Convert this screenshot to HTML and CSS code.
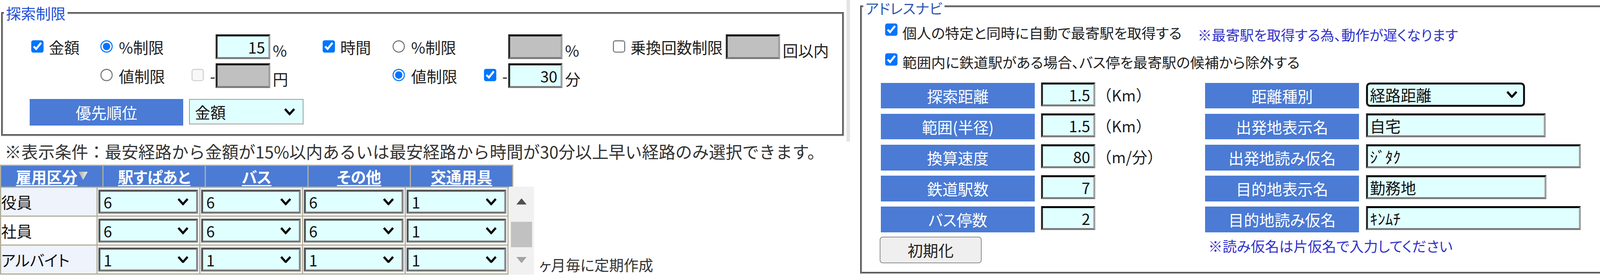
FILE: index.html
```html
<!DOCTYPE html>
<html lang="ja">
<head>
<meta charset="utf-8">
<title>探索制限 / アドレスナビ</title>
<link rel="stylesheet" href="styles.css">
</head>
<body>
<div class="page">
  <div class="left">
    <div class="limit-wrap">
      <fieldset class="fs fs-limit">
        <legend class="lg lg-limit">探索制限</legend>
        <div class="limit-grid">
          <label class="cell"><input type="checkbox" class="cb" checked>金額</label>
          <label class="cell"><input type="radio" name="amt" class="rb" checked>%制限</label>
          <div class="cell"><span class="slot"></span><input class="tx num" value="15"><span class="unit">%</span></div>
          <label class="cell"><input type="checkbox" class="cb" checked>時間</label>
          <label class="cell"><input type="radio" name="tm" class="rb">%制限</label>
          <div class="cell"><span class="slot"></span><input class="tx num off" disabled><span class="unit">%</span></div>
          <div class="cell"><label class="chk"><input type="checkbox" class="cb">乗換回数制限</label><input class="tx num off gap" disabled><span class="unit">回以内</span></div>

          <div class="cell"></div>
          <label class="cell"><input type="radio" name="amt" class="rb">値制限</label>
          <div class="cell"><span class="slot"><input type="checkbox" class="cb cb-a" disabled><span class="dash">-</span></span><input class="tx num off" disabled><span class="unit">円</span></div>
          <div class="cell"></div>
          <label class="cell"><input type="radio" name="tm" class="rb" checked>値制限</label>
          <div class="cell"><span class="slot"><input type="checkbox" class="cb cb-b" checked><span class="dash">-</span></span><input class="tx num" value="30"><span class="unit">分</span></div>
          <div class="cell"></div>
        </div>
        <div class="prio">
          <span class="lbl">優先順位</span>
          <span class="dd dd-prio">
            <select class="sel sel-prio"><option>金額</option><option>時間</option></select>
            <svg class="chev" width="11" height="7" viewBox="0 0 11 7"><path d="M1 1L5.5 6L10 1" fill="none" stroke="#000" stroke-width="2.1"/></svg>
          </span>
        </div>
      </fieldset>
    </div>

    <p class="cond">※表示条件：最安経路から金額が15%以内あるいは最安経路から時間が30分以上早い経路のみ選択できます。</p>

    <table class="emp-head">
      <tr>
        <th><span class="hl">雇用区分</span><svg class="sort" width="9" height="8" viewBox="0 0 9 8"><defs><linearGradient id="sg" x1="0" y1="0" x2="1" y2="0"><stop offset="0" stop-color="#a8a8a8"/><stop offset="1" stop-color="#f2f2f2"/></linearGradient></defs><path d="M0 0H9L4.5 8Z" fill="url(#sg)"/></svg></th>
        <th><span class="hl">駅すぱあと</span></th>
        <th><span class="hl">バス</span></th>
        <th><span class="hl">その他</span></th>
        <th><span class="hl">交通用具</span></th>
      </tr>
    </table>

    <div class="emp-body">
      <div class="scroller">
        <table class="emp-table">
          <colgroup><col class="c-l"><col><col><col><col></colgroup>
          <tr class="r-alt">
            <td class="rl">役員</td>
            <td><span class="dd dd-cell"><select class="sel sel-cell"><option>6</option></select><svg class="chev" width="11" height="7" viewBox="0 0 11 7"><path d="M1 1L5.5 6L10 1" fill="none" stroke="#000" stroke-width="2.1"/></svg></span></td>
            <td><span class="dd dd-cell"><select class="sel sel-cell"><option>6</option></select><svg class="chev" width="11" height="7" viewBox="0 0 11 7"><path d="M1 1L5.5 6L10 1" fill="none" stroke="#000" stroke-width="2.1"/></svg></span></td>
            <td><span class="dd dd-cell"><select class="sel sel-cell"><option>6</option></select><svg class="chev" width="11" height="7" viewBox="0 0 11 7"><path d="M1 1L5.5 6L10 1" fill="none" stroke="#000" stroke-width="2.1"/></svg></span></td>
            <td><span class="dd dd-cell"><select class="sel sel-cell"><option>1</option></select><svg class="chev" width="11" height="7" viewBox="0 0 11 7"><path d="M1 1L5.5 6L10 1" fill="none" stroke="#000" stroke-width="2.1"/></svg></span></td>
          </tr>
          <tr class="r-plain">
            <td class="rl">社員</td>
            <td><span class="dd dd-cell"><select class="sel sel-cell"><option>6</option></select><svg class="chev" width="11" height="7" viewBox="0 0 11 7"><path d="M1 1L5.5 6L10 1" fill="none" stroke="#000" stroke-width="2.1"/></svg></span></td>
            <td><span class="dd dd-cell"><select class="sel sel-cell"><option>6</option></select><svg class="chev" width="11" height="7" viewBox="0 0 11 7"><path d="M1 1L5.5 6L10 1" fill="none" stroke="#000" stroke-width="2.1"/></svg></span></td>
            <td><span class="dd dd-cell"><select class="sel sel-cell"><option>6</option></select><svg class="chev" width="11" height="7" viewBox="0 0 11 7"><path d="M1 1L5.5 6L10 1" fill="none" stroke="#000" stroke-width="2.1"/></svg></span></td>
            <td><span class="dd dd-cell"><select class="sel sel-cell"><option>1</option></select><svg class="chev" width="11" height="7" viewBox="0 0 11 7"><path d="M1 1L5.5 6L10 1" fill="none" stroke="#000" stroke-width="2.1"/></svg></span></td>
          </tr>
          <tr class="r-alt">
            <td class="rl">アルバイト</td>
            <td><span class="dd dd-cell"><select class="sel sel-cell"><option>1</option></select><svg class="chev" width="11" height="7" viewBox="0 0 11 7"><path d="M1 1L5.5 6L10 1" fill="none" stroke="#000" stroke-width="2.1"/></svg></span></td>
            <td><span class="dd dd-cell"><select class="sel sel-cell"><option>1</option></select><svg class="chev" width="11" height="7" viewBox="0 0 11 7"><path d="M1 1L5.5 6L10 1" fill="none" stroke="#000" stroke-width="2.1"/></svg></span></td>
            <td><span class="dd dd-cell"><select class="sel sel-cell"><option>1</option></select><svg class="chev" width="11" height="7" viewBox="0 0 11 7"><path d="M1 1L5.5 6L10 1" fill="none" stroke="#000" stroke-width="2.1"/></svg></span></td>
            <td><span class="dd dd-cell"><select class="sel sel-cell"><option>1</option></select><svg class="chev" width="11" height="7" viewBox="0 0 11 7"><path d="M1 1L5.5 6L10 1" fill="none" stroke="#000" stroke-width="2.1"/></svg></span></td>
          </tr>
        </table>
        <div class="vscroll">
          <span class="sb-btn sb-up"><svg width="10" height="6" viewBox="0 0 10 6"><path d="M0 6H10L5 0Z" fill="#505050"/></svg></span>
          <span class="sb-thumb"></span>
          <span class="sb-btn sb-down"><svg width="10" height="6" viewBox="0 0 10 6"><path d="M0 0H10L5 6Z" fill="#a3a3a3"/></svg></span>
        </div>
      </div>
      <span class="cycle">ヶ月毎に定期作成</span>
    </div>
  </div>

  <fieldset class="fs fs-nav">
    <legend class="lg lg-nav">アドレスナビ</legend>
    <div class="nav-body">
      <div class="opt">
        <label class="chk"><input type="checkbox" class="cb" checked>個人の特定と同時に自動で最寄駅を取得する</label>
        <span class="hint">※最寄駅を取得する為、動作が遅くなります</span>
      </div>
      <div class="opt opt2">
        <label class="chk"><input type="checkbox" class="cb" checked>範囲内に鉄道駅がある場合、バス停を最寄駅の候補から除外する</label>
      </div>
      <div class="nav-grid">
        <div class="nav-col nav-col-l">
          <div class="nav-row"><span class="lbl">探索距離</span><input class="tx num sm" value="1.5"><span class="unit2">（Km）</span></div>
          <div class="nav-row"><span class="lbl">範囲(半径)</span><input class="tx num sm" value="1.5"><span class="unit2">（Km）</span></div>
          <div class="nav-row"><span class="lbl">換算速度</span><input class="tx num sm" value="80"><span class="unit2">（m/分）</span></div>
          <div class="nav-row"><span class="lbl">鉄道駅数</span><input class="tx num sm" value="7"></div>
          <div class="nav-row"><span class="lbl">バス停数</span><input class="tx num sm" value="2"></div>
          <button class="btn-reset" type="button">初期化</button>
        </div>
        <div class="nav-col nav-col-r">
          <div class="nav-row"><span class="lbl">距離種別</span><span class="dd dd-kind"><select class="sel sel-kind"><option>経路距離</option><option>直線距離</option></select><svg class="chev" width="11" height="7" viewBox="0 0 11 7"><path d="M1 1L5.5 6L10 1" fill="none" stroke="#000" stroke-width="2.1"/></svg></span></div>
          <div class="nav-row"><span class="lbl">出発地表示名</span><input class="tx txt w175" value="自宅"></div>
          <div class="nav-row"><span class="lbl">出発地読み仮名</span><input class="tx txt w209" value="ｼﾞﾀｸ"></div>
          <div class="nav-row"><span class="lbl">目的地表示名</span><input class="tx txt w176" value="勤務地"></div>
          <div class="nav-row"><span class="lbl">目的地読み仮名</span><input class="tx txt w209" value="ｷﾝﾑﾁ"></div>
          <p class="hint hint2">※読み仮名は片仮名で入力してください</p>
        </div>
      </div>
    </div>
  </fieldset>
</div>
</body>
</html>
```

FILE: styles.css
```css
html {
  zoom: 2.6256;
  overflow: hidden;
}

body {
  margin: 0;
  overflow: hidden;
  background: #fff;
  color: #222;
  font-family: "Noto Sans CJK JP", "Noto Sans", sans-serif;
  font-size: 15px;
  line-height: 18px;
  font-feature-settings: "palt";
}

input,
select,
button {
  font-family: "Noto Sans CJK JP", "Noto Sans", sans-serif;
  font-size: 15px;
  font-feature-settings: "palt";
  color: #111;
}

.page {
  display: flex;
  align-items: flex-start;
  width: 1568px;
}

.left {
  flex: none;
  width: 828.7px;
  display: flex;
  flex-direction: column;
}

.limit-wrap {
  box-sizing: border-box;
  width: 828.7px;
  height: 138px;
  padding: 5.7px 0 0 1px;
  border-right: 3.7px solid #e4e4e4;
}

.fs {
  margin: 0;
  padding: 0;
  min-width: 0;
  box-sizing: border-box;
  border: 2px groove #a4a4a4;
}

.fs-limit {
  width: 822px;
}

.lg {
  padding: 0 2px;
  margin-left: 1px;
  line-height: 14px;
  white-space: nowrap;
}

.lg-limit {
  font-size: 14.5px;
  color: #1f50d6;
}

.lg-nav {
  font-size: 14px;
  line-height: 13px;
  padding-top: 3px;
  color: #2f57b2;
}

/* 探索制限 grid */
.limit-grid {
  display: grid;
  grid-template-columns: 67.1px 87px 130px 68px 87px 128px auto;
  grid-template-rows: 24px 24px;
  row-gap: 4px;
  margin: 13.9px 0 0 25.9px;
}

.cell {
  display: flex;
  align-items: center;
  white-space: nowrap;
}

.chk {
  display: flex;
  align-items: center;
  white-space: nowrap;
  line-height: 18px;
}

.cb {
  flex: none;
  width: 13px;
  height: 13px;
  margin: 0 4px 0 1.8px;
}

.rb {
  flex: none;
  width: 13px;
  height: 13px;
  margin: 0 5px 0 2px;
}

.slot {
  flex: none;
  width: 27.5px;
  display: flex;
  align-items: center;
  justify-content: space-between;
}

.slot .cb-a {
  margin: 0 0 0 3.5px;
}

.slot .cb-b {
  margin: 0 0 0 4px;
}

.dash {
  margin-right: 0.5px;
}

.tx {
  box-sizing: border-box;
  height: 24px;
  margin: 0;
  padding: 0 3px;
  border-style: solid;
  border-width: 2px;
  border-color: #000 #a0a0a0 #7c7c7c #2b2b2b;
  border-radius: 0;
  background: #e0ffff;
  outline: none;
}

.num {
  width: 53px;
  text-align: right;
}

.off {
  background: #c0c0c0;
}

.gap {
  margin-left: 3px;
}

.unit {
  align-self: flex-end;
  line-height: 18px;
  margin-left: 2.5px;
}

.prio {
  display: flex;
  align-items: center;
  gap: 5.5px;
  margin: 10.9px 0 8.5px 25.9px;
}

.lbl {
  flex: none;
  box-sizing: border-box;
  width: 150px;
  height: 25px;
  display: flex;
  align-items: center;
  justify-content: center;
  background: #4b7bd4;
  color: #fff;
  white-space: nowrap;
}

.prio .lbl {
  height: 25.6px;
}

/* dropdowns */
.dd {
  position: relative;
  display: inline-block;
  flex: none;
}

.chev {
  position: absolute;
  top: 50%;
  right: 8px;
  margin-top: -3.5px;
  pointer-events: none;
}

.sel {
  -webkit-appearance: none;
  appearance: none;
  display: block;
  box-sizing: border-box;
  margin: 0;
  border-radius: 0;
  background-color: #e0ffff;
  color: #111;
  line-height: 18px;
}

.sel-prio {
  width: 111.6px;
  height: 24.5px;
  border: 1px solid #9c9c9c;
  padding: 0 0 0 5px;
}

.dd-prio {
  margin-top: -1px;
}

/* condition note */
.cond {
  margin: 0 0 3.2px 4.5px;
  font-size: 16.3px;
  line-height: 19px;
  white-space: nowrap;
  color: #333;
  font-feature-settings: normal;
}

/* employment table */
.emp-head {
  border-spacing: 1.3px;
  background: #b4af9b;
  width: 500.5px;
  table-layout: fixed;
}

.emp-head th {
  background: #4b7bd4;
  color: #fff;
  font-weight: 700;
  height: 20.7px;
  padding: 0;
  line-height: 20px;
  white-space: nowrap;
}

.hl {
  text-decoration: underline;
  text-underline-offset: 2px;
}

.sort {
  margin-left: 1px;
  vertical-align: 3px;
}

.emp-body {
  display: flex;
  align-items: flex-end;
  margin-top: -1.5px;
}

.scroller {
  flex: none;
  display: flex;
  align-items: flex-start;
  height: 85.5px;
  overflow: hidden;
}

.emp-table {
  flex: none;
  border-spacing: 1.5px;
  background: #b4af9b;
  width: 496px;
  table-layout: fixed;
}

.emp-table .c-l {
  width: 93px;
}

.emp-table td {
  height: 27px;
  padding: 0 0.75px;
  white-space: nowrap;
  color: #111;
}

.emp-table .rl {
  padding: 0;
  text-align: left;
}

.r-alt td {
  background: #eef3fc;
}

.r-plain td {
  background: #fff;
}

.dd-cell {
  display: block;
  width: 97px;
}

.dd-cell .chev {
  right: 9px;
}

.sel-cell {
  width: 97px;
  height: 23.3px;
  border: 2px solid;
  border-color: #555 #8a8a8a #777 #555;
  padding: 0 0 0 3px;
}

.vscroll {
  flex: none;
  width: 24.3px;
  height: 85.5px;
  margin-left: 0.3px;
  background: #f1f1f1;
  display: flex;
  flex-direction: column;
  align-items: center;
}

.sb-btn {
  flex: none;
  width: 100%;
  display: flex;
  align-items: center;
  justify-content: center;
}

.sb-up {
  height: 29px;
}

.sb-thumb {
  flex: none;
  width: 20.4px;
  height: 24.6px;
  margin-top: 5.3px;
  background: #c1c1c1;
}

.sb-down {
  height: 25.4px;
}

.cycle {
  margin: 0 0 1px 5px;
  font-size: 14.3px;
  line-height: 18px;
  white-space: nowrap;
  color: #333;
}

/* アドレスナビ */
.fs-nav {
  flex: none;
  width: 728px;
  margin: -1.7px 0 0 10.1px;
}

.nav-body {
  padding: 8.4px 0 8.5px 18.2px;
}

.opt {
  display: flex;
  align-items: flex-end;
  margin-left: 4px;
  white-space: nowrap;
}

.opt .chk {
  font-size: 14px;
}

.opt .cb {
  margin: 0 4px 5px 0;
}

.opt2 {
  margin-top: 10.9px;
}

.hint {
  color: #3232c8;
  font-size: 13.7px;
  line-height: 14px;
  margin-left: 15.5px;
  white-space: nowrap;
}

.nav-grid {
  display: flex;
  margin-top: 11px;
}

.nav-col {
  flex: none;
  display: flex;
  flex-direction: column;
  gap: 5.15px;
}

.nav-col-l {
  width: 316.2px;
}

.nav-row {
  display: flex;
  align-items: center;
  height: 25px;
}

.nav-row .tx,
.nav-row .dd {
  height: 23.2px;
  margin: 0 0 2.4px 6.3px;
}

.nav-col-r .nav-row .tx,
.nav-col-r .nav-row .dd {
  margin-left: 6.7px;
}

.sm {
  width: 52.7px;
}

.txt {
  text-align: left;
  padding: 0 2px;
}

.w175 {
  width: 175.4px;
}

.w176 {
  width: 176px;
}

.w209 {
  width: 209.5px;
}

.unit2 {
  margin: 0 0 2.4px 1px;
  white-space: nowrap;
  font-feature-settings: normal;
}

.sel-kind {
  width: 155.1px;
  height: 23.8px;
  border: 2px solid #111;
  border-radius: 4px;
  padding: 0 0 0 2px;
}

.dd-kind .chev {
  right: 7.3px;
}

.btn-reset {
  align-self: flex-start;
  width: 99.4px;
  height: 25.9px;
  margin: -1px 0 0 -1.3px;
  padding: 0;
  background: #efefef;
  border: 1px solid #8d8d8d;
  border-radius: 3px;
  color: #222;
}

.hint2 {
  margin: 0 0 0 3px;
  font-size: 13.9px;
  line-height: 17px;
}
```
